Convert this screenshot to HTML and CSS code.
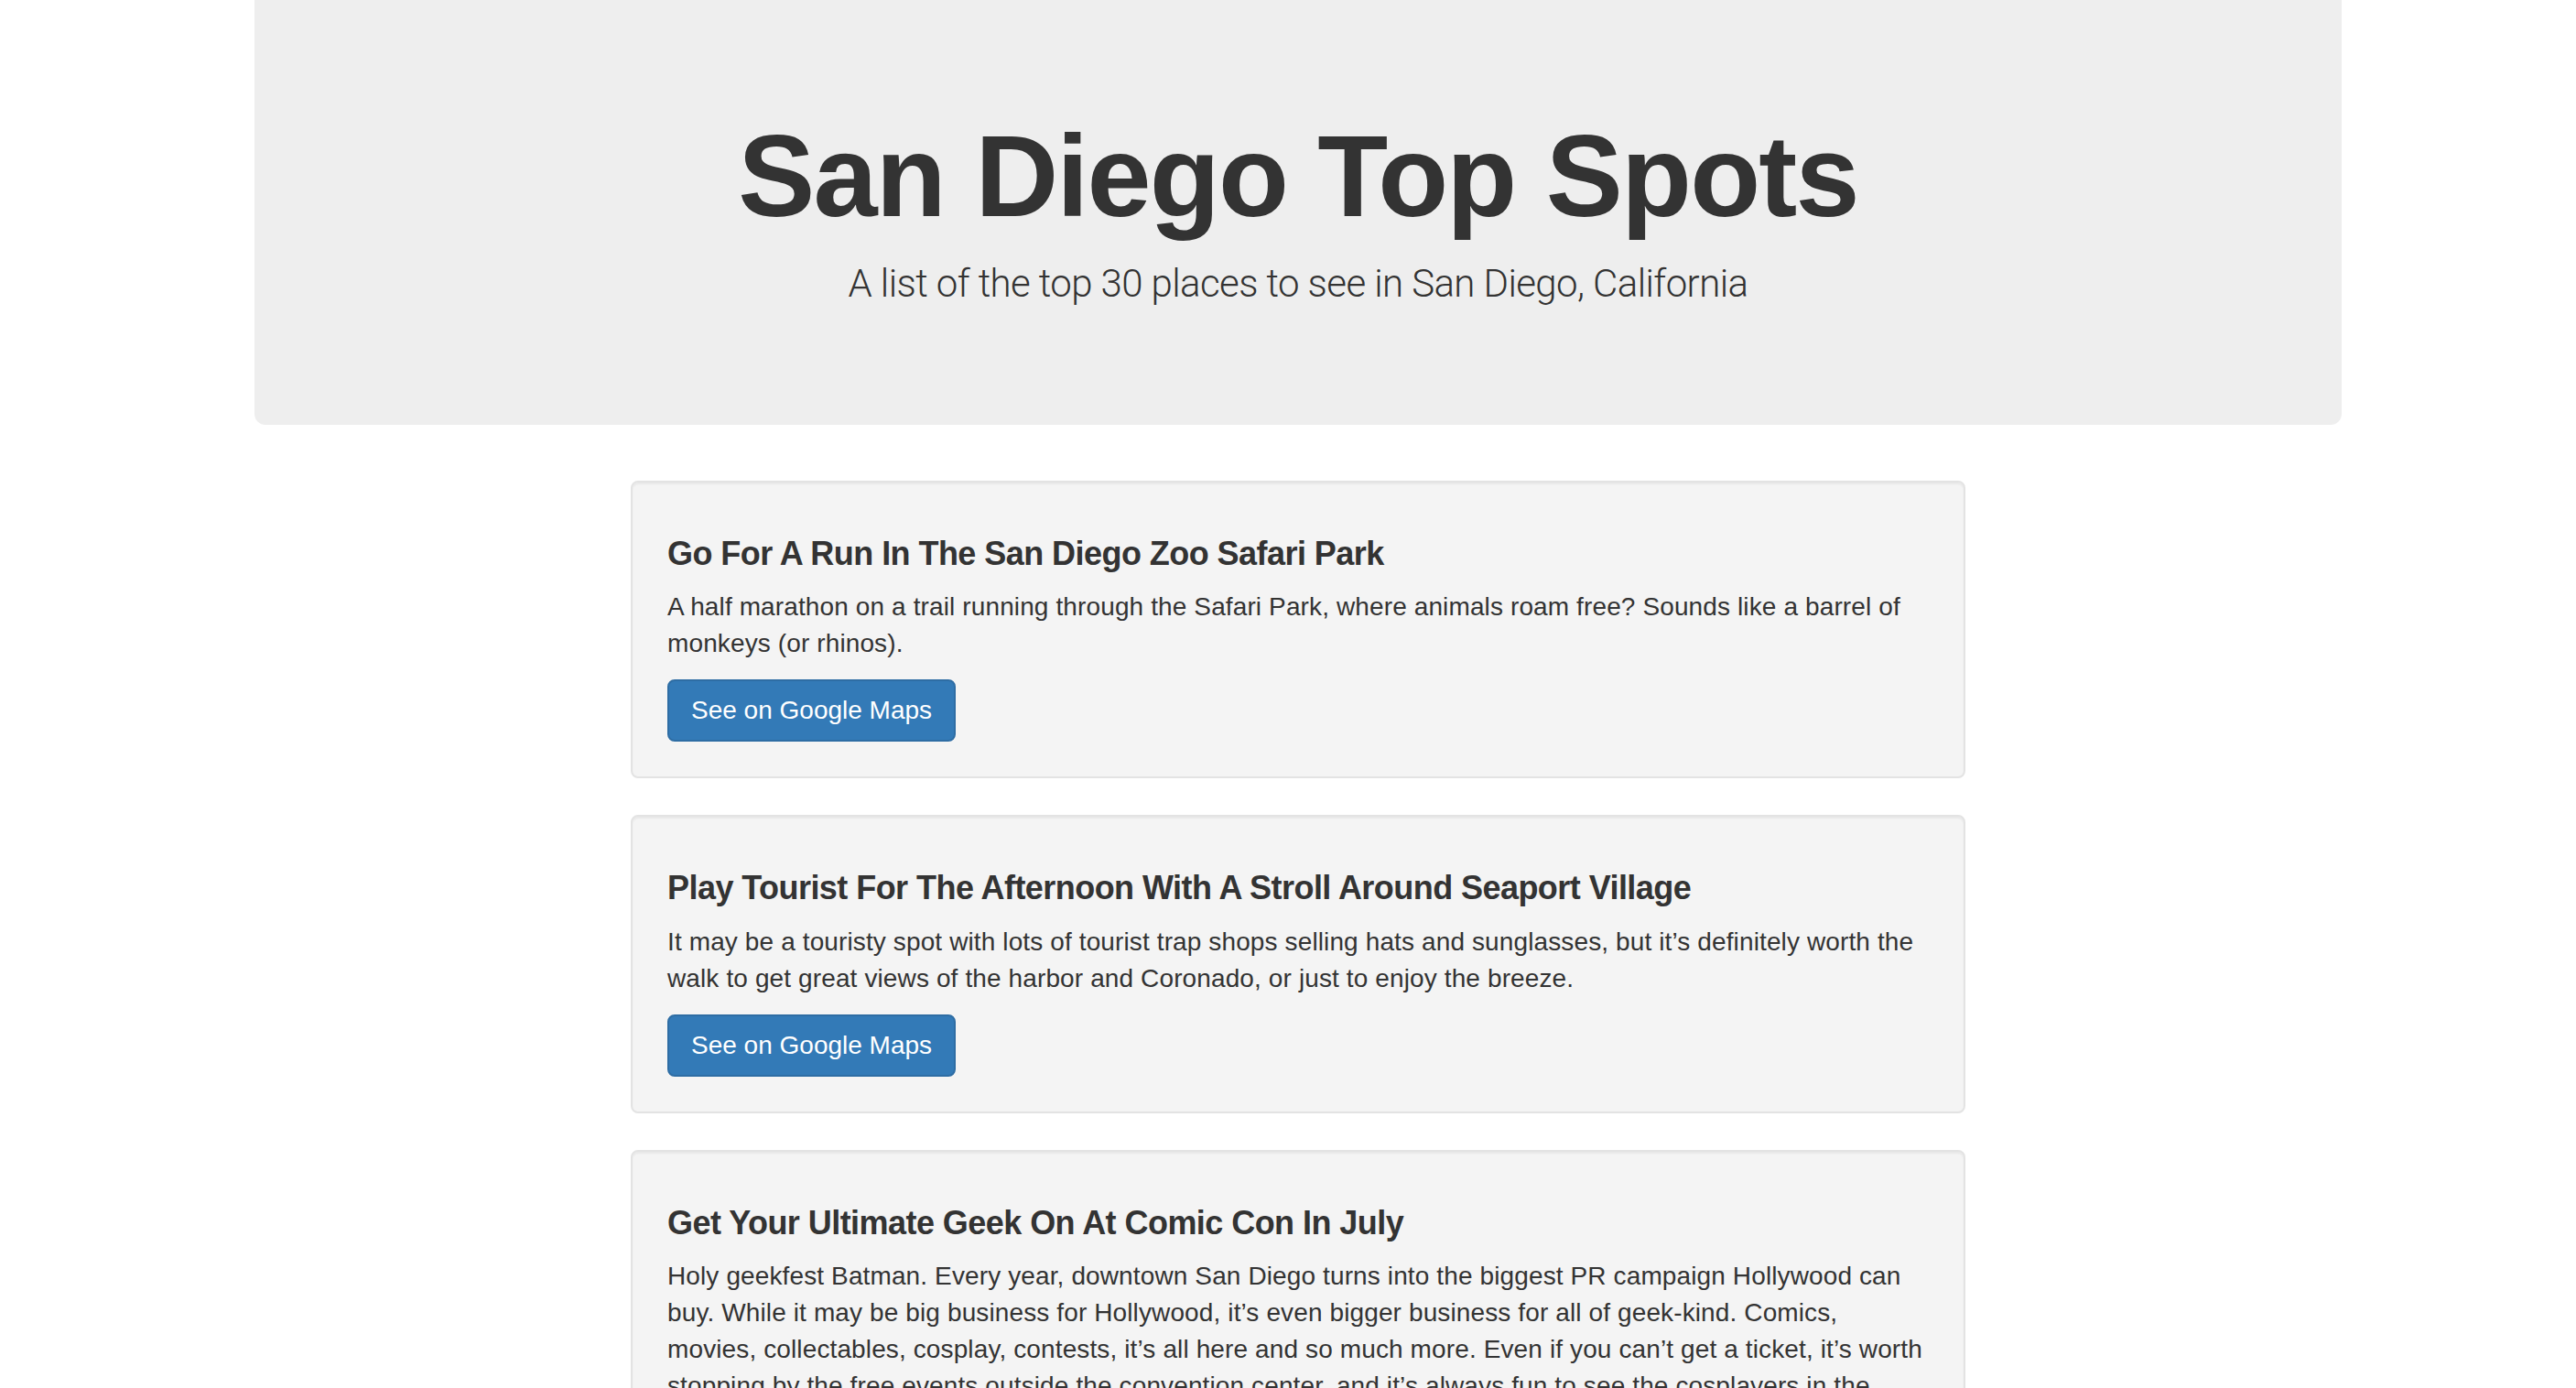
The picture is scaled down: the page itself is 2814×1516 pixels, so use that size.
FILE: index.html
```html
<!DOCTYPE html>
<html lang="en">
<head>
<meta charset="utf-8">
<title>San Diego Top Spots</title>
<link rel="stylesheet" href="styles.css">
</head>
<body>
<div class="page">
  <header class="jumbotron">
    <h1 class="jumbotron-title">San Diego Top Spots</h1>
    <p class="jumbotron-lead">A list of the top 30 places to see in San Diego, California</p>
  </header>

  <main class="spots">
    <section class="well">
      <h4 class="well-title">Go For A Run In The San Diego Zoo Safari Park</h4>
      <p class="well-text">A half marathon on a trail running through the Safari Park, where animals roam free? Sounds like a barrel of monkeys (or rhinos).</p>
      <a class="btn" href="#">See on Google Maps</a>
    </section>

    <section class="well">
      <h4 class="well-title">Play Tourist For The Afternoon With A Stroll Around Seaport Village</h4>
      <p class="well-text">It may be a touristy spot with lots of tourist trap shops selling hats and sunglasses, but it’s definitely worth the walk to get great views of the harbor and Coronado, or just to enjoy the breeze.</p>
      <a class="btn" href="#">See on Google Maps</a>
    </section>

    <section class="well">
      <h4 class="well-title">Get Your Ultimate Geek On At Comic Con In July</h4>
      <p class="well-text">Holy geekfest Batman. Every year, downtown San Diego turns into the biggest PR campaign Hollywood can buy. While it may be big business for Hollywood, it’s even bigger business for all of geek-kind. Comics, movies, collectables, cosplay, contests, it’s all here and so much more. Even if you can’t get a ticket, it’s worth stopping by the free events outside the convention center, and it’s always fun to see the cosplayers in the streets.</p>
      <a class="btn" href="#">See on Google Maps</a>
    </section>
  </main>
</div>
</body>
</html>
```

FILE: styles.css
```css
* { box-sizing: border-box; }

html, body {
  margin: 0;
  padding: 0;
  background: #fff;
}

body {
  font-family: "Liberation Sans", Arial, sans-serif;
  font-size: 28px;
  line-height: 40px;
  color: #333;
}

.page {
  padding-left: 22px;
}

.jumbotron {
  width: 2280px;
  margin: 0 auto 61px;
  padding: 84px 60px 94px;
  background: #eee;
  border-radius: 0 0 12px 12px;
  text-align: center;
}

.jumbotron-title {
  margin: 40px 0 17px;
  font-family: "Liberation Sans", Arial, sans-serif;
  font-size: 126px;
  font-weight: 700;
  line-height: 138.6px;
  letter-spacing: -1.8px;
  color: #333;
}

.jumbotron-lead {
  margin: 0 0 30px;
  font-family: Roboto, "Liberation Sans", sans-serif;
  font-size: 42px;
  font-weight: 300;
  line-height: 60px;
  letter-spacing: -0.6px;
  color: #333;
}

.spots {
  width: 1458px;
  margin: 0 auto;
}

.well {
  margin-bottom: 40px;
  padding: 38px;
  background: #f4f4f4;
  border: 2px solid #e3e3e3;
  border-radius: 8px;
  box-shadow: inset 0 2px 2px rgba(0, 0, 0, 0.05);
}

.well-title {
  margin: 20px 0 19px;
  font-size: 36px;
  font-weight: 700;
  line-height: 39.6px;
  letter-spacing: -0.55px;
  color: #333;
}

.well-text {
  margin: 0 0 19px;
  letter-spacing: 0.12px;
}

.btn {
  display: inline-block;
  padding: 12px 24px;
  font-size: 28px;
  line-height: 40px;
  color: #fff;
  text-decoration: none;
  background: #337ab7;
  border: 2px solid #2e6da4;
  border-radius: 8px;
}
```
